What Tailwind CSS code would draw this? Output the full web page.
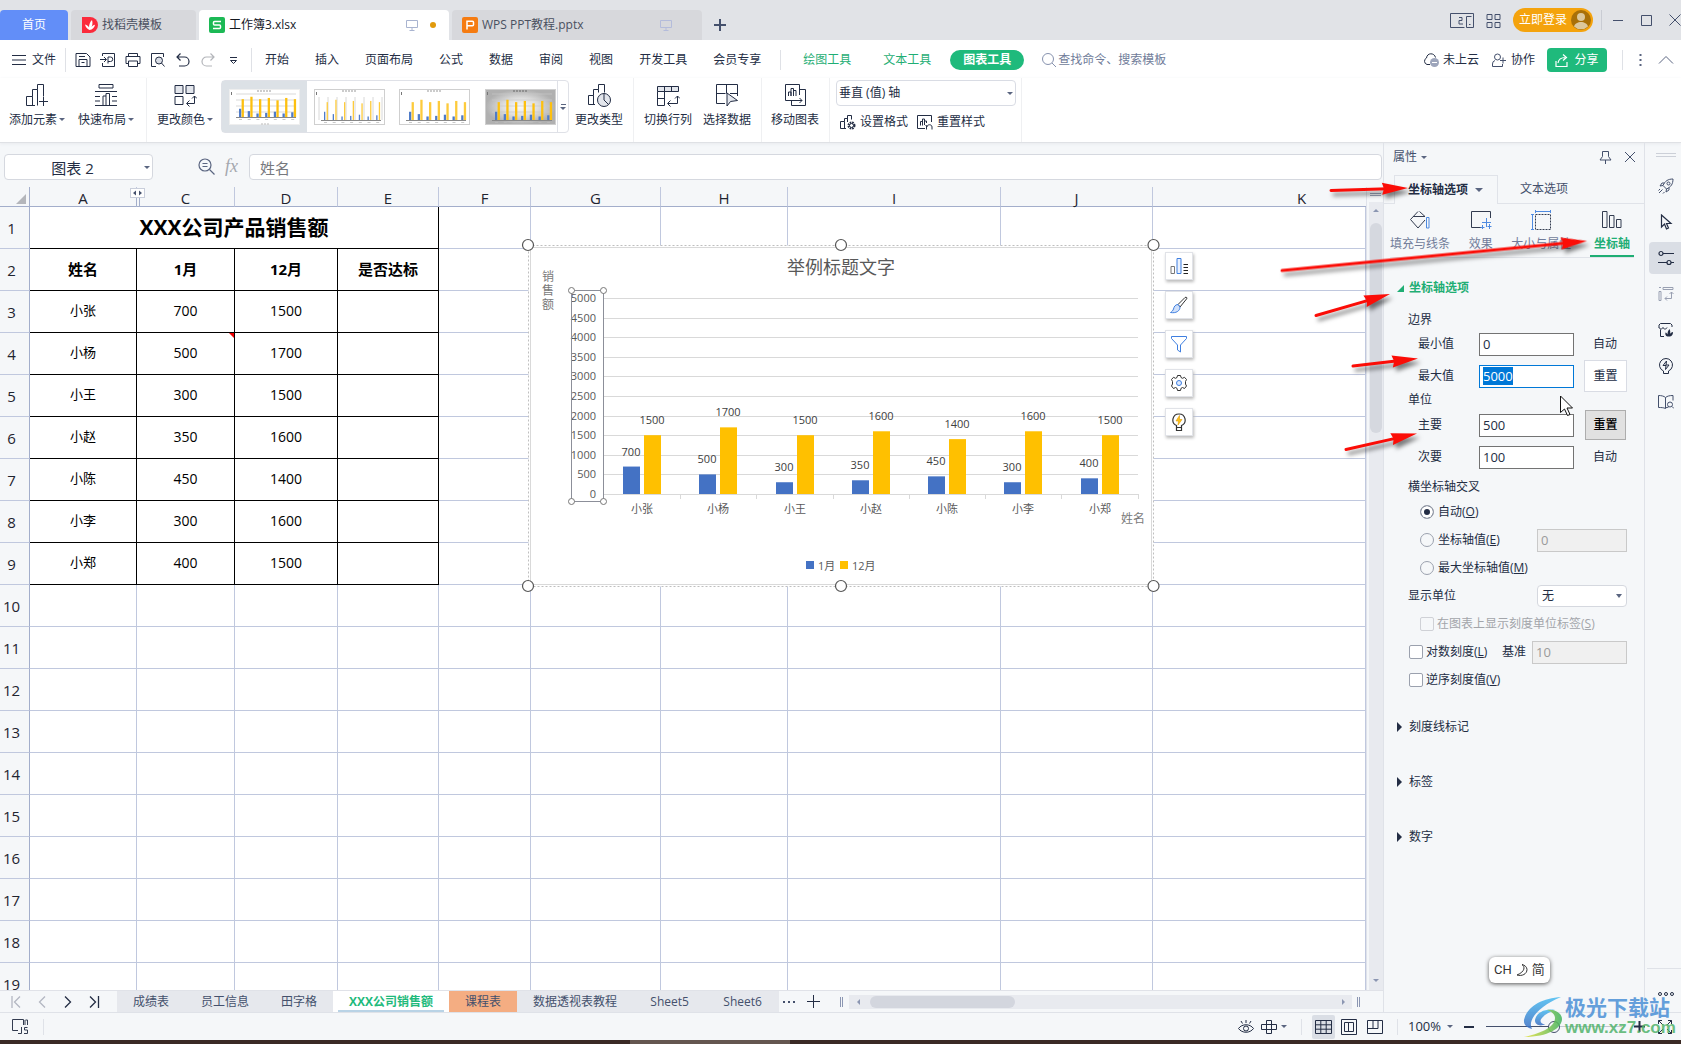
<!DOCTYPE html>
<html lang="zh-CN">
<head>
<meta charset="utf-8">
<title>工作簿3.xlsx</title>
<script src="https://cdn.jsdelivr.net/npm/@tailwindcss/browser@4"></script>
</head>
<body class="relative flex h-screen flex-col overflow-hidden bg-[#f5f7f9] font-['Open_Sans','Noto_Sans_CJK_SC',sans-serif] text-xs text-[#232d44]">

<!-- Window tabs -->
<header class="flex h-10 shrink-0 items-end justify-between bg-[#e1e3e7]">
  <div class="flex items-end gap-[3px]">
    <button class="h-[30px] w-[68px] rounded-t bg-[#628ef8] text-white">首页</button>
    <button class="flex h-[30px] w-[125px] items-center gap-1 rounded-t bg-[#d7d8dc] px-[11px] text-[#4a5060]">
      <svg class="size-4" viewBox="0 0 16 16"><path d="M0 0h8a8 8 0 0 1 0 16H0z" fill="#fb2a3b"/><path d="M7.500 13C5 12 3.500 10 3 7.500 5 8 6.500 9 7 10.500 7 7.500 8 5 10 3c.8 3 .5 5-.5 7 .8-1.200 2-2 3.500-2.300C12.500 10.500 10.500 12.500 7.500 13z" fill="#fff"/></svg>
      找稻壳模板</button>
    <button class="flex h-[30px] w-[250px] items-center gap-1 rounded-t bg-white px-[10px] text-[#14181f]">
      <svg class="size-4" viewBox="0 0 16 16"><rect width="16" height="16" rx="2" fill="#1cb955"/><path d="M12 4.500H5.500a1 1 0 0 0-1 1V7a1 1 0 0 0 1 1h5a1 1 0 0 1 1 1v1.500a1 1 0 0 1-1 1H4" fill="none" stroke="#fff" stroke-width="1.500"/></svg>
      工作簿3.xlsx
      <svg class="ml-auto size-3 text-[#a9b4d0]" viewBox="0 0 12 12" fill="none" stroke="currentColor"><path d="M.5 1.500h11v7H.5zM6 8.500v2.500M3.500 11.500h5"/></svg>
      <span class="mr-[3px] ml-2 size-[6px] rounded-full bg-[#e19a0c]"></span></button>
    <button class="flex h-[30px] w-[250px] items-center gap-1 rounded-t bg-[#d7d8dc] px-[10px] text-[#4a5060]">
      <svg class="size-4" viewBox="0 0 16 16"><rect width="16" height="16" rx="2" fill="#f57c12"/><path d="M5 12.500V4.200h5.500a1 1 0 0 1 1 1v2.600a1 1 0 0 1-1 1H5" fill="none" stroke="#fff" stroke-width="1.500"/></svg>
      WPS PPT教程.pptx
      <svg class="mr-5 ml-auto size-3 text-[#b4bcdb]" viewBox="0 0 12 12" fill="none" stroke="currentColor"><path d="M.5 1.500h11v7H.5zM6 8.500v2.500M3.500 11.500h5"/></svg></button>
    <button aria-label="新建" class="ml-[9px] h-[30px] text-[#44506c]"><svg class="size-3" viewBox="0 0 12 12" fill="none" stroke="currentColor" stroke-width="2"><path d="M6 0v12M0 6h12"/></svg></button>
  </div>
  <div class="flex h-10 items-center text-[#44506c]">
    <svg class="mr-3 h-[15px] w-6" viewBox="0 0 24 15" fill="none" stroke="currentColor"><path d="M14.500 14.500H.5V.5h23v14h-7V3.500h5"/><path d="M9 4.500h3v3H9v3.500h4M19 11.500h1.500"/></svg>
    <svg class="mr-3 size-[15px]" viewBox="0 0 15 15" fill="none" stroke="currentColor"><path d="M1 1.500h5v5H1zM9 1.500h5v5H9zM1 9.500h5v5H1zM9 9.500h5v5H9z"/></svg>
    <button class="flex h-6 w-20 items-center justify-between rounded-full bg-[#f4a30d] pr-[2px] pl-[6px] text-white">立即登录
      <svg class="size-5" viewBox="0 0 20 20"><circle cx="10" cy="10" r="10" fill="#a97008"/><circle cx="10" cy="7" r="4" fill="#dcc79c"/><path d="M3 16.500c1.500-6 12.500-6 14 0a10 10 0 0 1-14 0z" fill="#dcc79c"/></svg></button>
    <span class="mx-2 h-5 w-px bg-[#c9ccd3]"></span>
    <svg class="mx-[2px] h-3 w-3" viewBox="0 0 12 12" fill="none" stroke="currentColor"><path d="M1 6.500h10"/></svg>
    <svg class="mx-[15px] size-[11px]" viewBox="0 0 11 11" fill="none" stroke="currentColor"><path d="M.5.5h10v10H.5z"/></svg>
    <svg class="ml-[2px] size-3" viewBox="0 0 12 12" fill="none" stroke="currentColor"><path d="M.5.5l11 11M11.500.5l-11 11"/></svg>
  </div>
</header>

<!-- Menu row -->
<nav class="flex h-[38px] shrink-0 items-center bg-white pt-[2px]">
  <button class="flex items-center gap-[6px] pr-[9px] pl-3"><svg class="h-3 w-[14px]" viewBox="0 0 14 12" stroke="currentColor"><path d="M0 1.500h14M0 6h14M0 10.500h14"/></svg>文件</button>
  <span class="h-6 w-px bg-[#dfe1e6]"></span>
  <div class="flex items-center gap-[9px] pr-[10px] pl-[9px]">
    <svg class="size-4" viewBox="0 0 16 16" fill="none" stroke="currentColor"><path d="M1 1.500h10.500l3.500 3.500v9.500H1zM4 14.500V7.500h8v7M4 4.500h6M6.500 10.500h3"/></svg>
    <svg class="size-4" viewBox="0 0 16 16" fill="none" stroke="currentColor"><path d="M2.500 4V1.500h12v13h-12V11M0 7.500h6M4 5l2.500 2.500L4 10M8 11.500V5h2.500a2 2 0 0 1 0 4.500H8"/></svg>
    <svg class="size-4" viewBox="0 0 16 16" fill="none" stroke="currentColor"><path d="M3.500 4.500v-3h9v3M1 4.500h14v7h-2.500M3.500 11.500H1v-7M3.500 9h9v5.500h-9z"/></svg>
    <svg class="size-4" viewBox="0 0 16 16" fill="none" stroke="currentColor"><path d="M6 14.500H1.500v-13h12V5"/><circle cx="9" cy="8.500" r="3.500" fill="#d9dde5"/><path d="M11.500 11l3 3.500"/></svg>
    <svg class="size-4" viewBox="0 0 16 16" fill="none" stroke="currentColor" stroke-width="1.200"><path d="M5.500 1.500l-3.500 3.500 3.500 3.500M2 5h7.500a4.500 4.500 0 0 1 0 9H4"/></svg>
    <svg class="size-4 text-[#b3b5ba]" viewBox="0 0 16 16" fill="none" stroke="currentColor" stroke-width="1.200"><path d="M10.500 1.500l3.500 3.500-3.500 3.500M14 5H6.500a4.500 4.500 0 0 0 0 9H12"/></svg>
    <svg class="size-4" viewBox="0 0 16 16" fill="none" stroke="currentColor"><path d="M5 5.500h7M5.500 8.500L8.500 11.500 11.500 8.500z"/></svg>
  </div>
  <span class="h-6 w-px bg-[#dfe1e6]"></span>
  <button class="px-[13px]">开始</button><button class="px-[13px]">插入</button><button class="px-[13px]">页面布局</button><button class="px-[13px]">公式</button><button class="px-[13px]">数据</button><button class="px-[13px]">审阅</button><button class="px-[13px]">视图</button><button class="px-[13px]">开发工具</button><button class="px-[13px]">会员专享</button>
  <span class="mx-[6px] h-5 w-px bg-[#dfe1e6]"></span>
  <button class="px-4 text-[#1fae74]">绘图工具</button><button class="px-4 text-[#1fae74]">文本工具</button>
  <button class="ml-[3px] h-5 w-[74px] rounded-full bg-[#1fba7c] font-bold text-white">图表工具</button>
  <label class="ml-[18px] flex flex-1 items-center gap-[2px]">
    <svg class="size-[14px] shrink-0 text-[#8792ae]" viewBox="0 0 14 14" fill="none" stroke="currentColor"><circle cx="6" cy="6" r="5.500"/><path d="M10 10l4 4"/></svg>
    <input type="text" aria-label="查找命令、搜索模板" placeholder="查找命令、搜索模板" class="w-40 outline-none placeholder:text-[#707c99]"></label>
  <button class="mr-[13px] flex items-center gap-1"><svg class="size-4" viewBox="0 0 16 16" fill="none" stroke="currentColor"><path d="M7 12.500H4a3.500 3.500 0 0 1-.5-6.500C4 .5 11.500.500 12.500 5.500"/><circle cx="11.500" cy="10.500" r="4.500" fill="#9da5bb" stroke="none"/><path d="M9 10.500h5" stroke="#fff"/></svg>未上云</button>
  <button class="flex items-center gap-[5px]"><svg class="size-[14px] text-[#44506c]" viewBox="0 0 14 14" fill="none" stroke="currentColor"><circle cx="5.500" cy="4" r="3"/><path d="M3 7.500a3.500 3.500 0 0 0-2.500 3.500v2.500h10V11M8 7.500h6M11 4.500v6"/></svg>协作</button>
  <button class="mx-3 flex h-6 w-[60px] items-center justify-center gap-[6px] rounded bg-[#1fba7c] text-white"><svg class="size-[13px]" viewBox="0 0 13 13" fill="none" stroke="currentColor" stroke-width="1.200"><path d="M1 7v5.500h11V8M3 9c.5-4 3-5.500 7.500-5.500M8 .500l3.500 3L8 6.500"/></svg>分享</button>
  <span class="ml-[3px] h-5 w-px bg-[#dfe1e6]"></span>
  <svg class="mx-4 h-3 w-[3px]" viewBox="0 0 3 12" fill="#5a6580"><path d="M.5 0h2v2h-2zM.5 5h2v2h-2zM.5 10h2v2h-2z"/></svg>
  <svg class="mr-[7px] h-2 w-4" viewBox="0 0 16 8" fill="none" stroke="#5a6580"><path d="M1 7.500l7-7 7 7"/></svg>
</nav>

<!-- Ribbon -->
<section class="flex h-[65px] shrink-0 border-b border-[#dfe1e5] bg-white shadow-[0_1px_3px_#e8eaee]">
  <button class="ml-[9px] flex w-[59px] flex-col items-start gap-[5px] pt-[5px]">
    <svg class="ml-4 h-6 w-6" viewBox="0 0 24 24" fill="none" stroke="currentColor"><path d="M10 22.500H1.500v-9h6v9M7.500 13.500V6.500h5v16M12.500 6.500V1.500h6v12M14 18.500h9M18.500 14v9"/></svg>
    <span class="flex items-center gap-[2px] leading-4">添加元素<i class="mt-[-2px] border-x-3 border-t-3 border-x-transparent border-t-[#5a6580]"></i></span></button>
  <button class="ml-[10px] flex w-[59px] flex-col items-start gap-[5px] pt-[5px]">
    <svg class="ml-4 h-6 w-6" viewBox="0 0 24 24" fill="none" stroke="currentColor"><path d="M5 1.500h14v3.500H5zM1 8.500h22M1 13.500h5M1 18h5M1 22.500h22M18 13.500h5M18 18h5M9 22V13h3v9M12 13V10.500h3.500V22"/></svg>
    <span class="flex items-center gap-[2px] leading-4">快速布局<i class="mt-[-2px] border-x-3 border-t-3 border-x-transparent border-t-[#5a6580]"></i></span></button>
  <span class="ml-[9px] w-px bg-[#eff0f2]"></span>
  <button class="ml-[10px] flex w-[59px] flex-col items-start gap-[5px] pt-[5px]">
    <svg class="ml-4 h-6 w-6" viewBox="0 0 24 24" fill="none" stroke="currentColor"><path d="M2 2.500h8v8H2zM13 2.500h8v8h-8z" fill="#e3e6ec"/><path d="M2 13.500h8v8H2zM21.500 13v7.500H14M19 15.500l2.500-2.500 2.500 2.500M16.500 17.500l-3 3 3 3"/></svg>
    <span class="flex items-center gap-[2px] leading-4">更改颜色<i class="mt-[-2px] border-x-3 border-t-3 border-x-transparent border-t-[#5a6580]"></i></span></button>
  <div id="gallery" class="mt-[2px] ml-[5px] flex h-[53px] rounded-sm border border-[#dfe1e7]">
    <button aria-label="样式 1" class="flex w-[85px] items-center justify-center bg-[#dce1e6]"></button>
    <button aria-label="样式 2" class="flex w-[85px] items-center justify-center"></button>
    <button aria-label="样式 3" class="flex w-[85px] items-center justify-center"></button>
    <button aria-label="样式 4" class="flex w-[80px] items-center justify-end pr-px"></button>
    <button aria-label="更多样式" class="flex w-[11px] flex-col items-center justify-center gap-[2px] border-l border-[#dfe1e7]"><span class="h-px w-[5px] bg-[#5a6580]"></span><i class="border-x-3 border-t-3 border-x-transparent border-t-[#5a6580]"></i></button>
  </div>
  <button class="ml-[6px] flex w-12 flex-col items-center gap-[5px] pt-[5px]">
    <svg class="h-6 w-6" viewBox="0 0 24 24" fill="none" stroke="currentColor"><path d="M8 21.500H1.500v-9h5v9M6.500 12.500V6.500h5v3M11.500 6.500V1.500h6v8"/><circle cx="17" cy="17" r="6.500" fill="#e3e6ec"/><path d="M17 10.500V17l4.500 4.500"/></svg><span class="leading-4">更改类型</span></button>
  <span class="ml-[10px] w-px bg-[#eff0f2]"></span>
  <button class="ml-[10px] flex w-12 flex-col items-center gap-[5px] pt-[5px]">
    <svg class="h-6 w-6" viewBox="0 0 24 24" fill="none" stroke="currentColor"><path d="M1.500 3.500h21v5h-21z" fill="#e3e6ec"/><path d="M8.500 3.500v19h-7v-14M1.500 15.500h7M15.500 3.500v5M21.500 13v7.500H12M19 15.500l2.500-2.500 2.500 2.500M14.500 17.500l-3 3 3 3"/></svg><span class="leading-4">切换行列</span></button>
  <button class="ml-[11px] flex w-12 flex-col items-center gap-[5px] pt-[5px]">
    <svg class="h-6 w-6" viewBox="0 0 24 24" fill="none" stroke="currentColor"><path d="M10 20.500H1.500v-19h21V13M1.500 10.500h9M15 10.500h7.500M11.500 1.500v9"/><path d="M12 10v13l3.500-4.500 7-1z" fill="#e3e6ec"/></svg><span class="leading-4">选择数据</span></button>
  <span class="ml-[10px] w-px bg-[#eff0f2]"></span>
  <button class="ml-[9px] flex w-12 flex-col items-center gap-[5px] pt-[5px]">
    <svg class="h-6 w-6" viewBox="0 0 24 24" fill="none" stroke="currentColor"><path d="M16.500 12V1.500h-14v16H12M16.500 6.500h6v16h-14v-5M5.500 13V9h2.500v4M8 13V5.500h2.500V13M10.500 13V7.500H13V13M12 17.500h7M16.500 15l2.500 2.500-2.500 2.500"/></svg><span class="leading-4">移动图表</span></button>
  <span class="ml-[10px] w-px bg-[#eff0f2]"></span>
  <div class="ml-[6px] flex flex-col gap-2 pt-[2px]">
    <div class="relative flex">
      <select aria-label="图表元素" class="h-[26px] w-[180px] appearance-none rounded-sm border border-[#d9dce4] pl-[2px]"><option>垂直 (值) 轴</option></select>
      <i class="pointer-events-none absolute top-[12px] right-[3px] border-x-3 border-t-3 border-x-transparent border-t-[#5a6580]"></i>
    </div>
    <div class="flex gap-[9px] pl-1">
      <button class="flex items-center gap-1"><svg class="size-4" viewBox="0 0 16 16" fill="none" stroke="currentColor"><path d="M6 14.500H.5v-7h4v7M4.500 7.500V4.500h3M7.500 8V1.500h4v4"/><circle cx="11.500" cy="11.500" r="3" stroke-width="2" stroke-dasharray="1.600 .800"/><circle cx="11.500" cy="11.500" r="2"/></svg>设置格式</button>
      <button class="flex items-center gap-1"><svg class="size-4" viewBox="0 0 16 16" fill="none" stroke="currentColor"><path d="M8 14.500H.5v-13h14V8M3.500 11.500v-4h2v4M5.500 11V5h2v6M7.500 7h2v2M9.500 15.500v-4h-1M10 13c0-3 5-3 5 0v2.500"/></svg>重置样式</button>
    </div>
  </div>
  <span class="ml-[5px] w-px bg-[#eff0f2]"></span>
</section>

<main class="relative flex min-h-0 flex-1">
  <!-- Sheet -->
  <section class="flex min-w-0 flex-1 flex-col">
    <div class="flex h-11 shrink-0 items-start pt-[11px] pr-px pl-1">
      <div class="relative">
        <input type="text" aria-label="名称框" value="图表 2" class="h-[26px] w-[149px] rounded-sm border border-[#d5d8df] bg-white pr-3 text-center text-[15px]">
        <i class="absolute top-[12px] right-[3px] border-x-3 border-t-3 border-x-transparent border-t-[#5a6580]"></i>
      </div>
      <svg class="mt-1 ml-[45px] size-[17px]" viewBox="0 0 17 17" fill="none" stroke="#5a6580" stroke-width="1.200"><circle cx="7" cy="7" r="6"/><path d="M11.500 11.500l5 5M4.500 5.500h5M4.500 8.500h5"/></svg>
      <span class="ml-[10px] w-[15px] font-['Liberation_Serif',serif] text-lg leading-6 text-[#a4a7ae] italic">fx</span>
      <input type="text" aria-label="编辑栏" value="姓名" class="ml-[9px] h-[26px] min-w-0 flex-1 rounded-sm border border-[#d5d8df] bg-white pl-[10px] text-[15px] text-[#77797e]">
    </div>

    <div class="relative flex min-h-0 flex-1 overflow-hidden">
      <div class="min-w-0 flex-1 overflow-hidden border-r border-[#dfe2ea] bg-white">
        <table class="w-full table-fixed border-separate border-spacing-0">
          <colgroup><col class="w-[30px]"><col class="w-[107px]"><col class="w-[98px]"><col class="w-[103px]"><col class="w-[101px]"><col class="w-[92px]"><col class="w-[130px]"><col class="w-[127px]"><col class="w-[213px]"><col class="w-[152px]"><col></colgroup>
          <thead><tr id="cols" class="h-5 bg-[#f5f7f9] text-sm text-[#1f2430]"></tr></thead>
          <tbody id="rows"></tbody>
        </table>
      </div>
      <div class="flex w-4 shrink-0 flex-col bg-[#f5f7f9]">
        <div class="mx-auto mt-[6px] h-[3px] w-[11px] border-y border-[#9aa3b8]"></div>
        <div class="mt-[6px] ml-[2px] flex flex-1 flex-col items-center bg-[#e8eaef]">
          <i class="mt-[7px] border-x-3 border-b-3 border-x-transparent border-b-[#8b96b2]"></i>
          <span class="mt-[11px] h-[210px] w-3 rounded-full bg-[#d5d8df]"></span>
          <i class="mt-auto mb-2 border-x-3 border-t-3 border-x-transparent border-t-[#8b96b2]"></i>
        </div>
      </div>

      <svg class="absolute top-0 left-[130px] h-5 w-[15px]" viewBox="0 0 15 20"><path d="M6.500 10v9.500M9.500 10v9.500" stroke="#a3aecb"/><rect x=".5" y="1.500" width="14" height="9" fill="#fff" stroke="#c9cedb"/><path d="M6 3.500v5L3 6zM9 3.500v5L12 6z" fill="#44506c"/></svg>
      <svg id="chart" class="absolute top-[49px] left-[520px] h-[360px] w-[640px]" viewBox="520 236 640 360" fill="none"></svg>

      <div class="absolute top-[65px] left-[1165px] flex flex-col gap-[11px]">
        <button aria-label="图表元素" class="flex size-7 items-center justify-center border border-[#e1e3e8] bg-white shadow-[1px_2px_3px_#bbb]"><svg class="size-[18px]" viewBox="0 0 18 18" fill="none"><path d="M1 9.500h3.500v7H1z" stroke="#777"/><path d="M7 1.500h4v15H7z" stroke="#3f7fe0" fill="#eaf2ff"/><path d="M13.500 7.500H18M13.500 10.500H18M13.500 13.500H18M13.500 16.500H18" stroke="#222"/></svg></button>
        <button aria-label="图表样式" class="flex size-7 items-center justify-center border border-[#e1e3e8] bg-white shadow-[1px_2px_3px_#bbb]"><svg class="size-[18px]" viewBox="0 0 18 18" fill="none"><path d="M8 8.500L15 1.500c1.500-1 2.500.5 1.500 1.500L10 11z" stroke="#333"/><path d="M8 8.500C5 8.500 4 11 3.500 13 3 14.500 2 15.500.5 16.500 6 17.500 10 15 10 11z" fill="#cfe0fb" stroke="#3f7fe0"/></svg></button>
        <button aria-label="图表筛选器" class="flex size-7 items-center justify-center border border-[#e1e3e8] bg-white shadow-[1px_2px_3px_#bbb]"><svg class="size-[18px]" viewBox="0 0 18 18" fill="none"><path d="M1.500 1.500h15v2L10.500 10v7l-3-2v-5l-6-6.500z" stroke="#3f7fe0"/></svg></button>
        <button aria-label="设置图表区域格式" class="flex size-7 items-center justify-center border border-[#e1e3e8] bg-white shadow-[1px_2px_3px_#bbb]"><svg class="size-[18px]" viewBox="0 0 18 18" fill="none"><path d="M7.500 1.500h3l.5 2 1.500.8 2-1 2 2.200-1 2v2.500l1 2-2 2.500-2-1-1.500.8-.5 2.200h-3L7 14.300l-1.500-.8-2 1-2-2.500 1-2V7.500l-1-2 2-2.200 2 1L7 3.500z" stroke="#333" stroke-linejoin="round"/><circle cx="9" cy="9" r="2.500" stroke="#3f7fe0" fill="#dce9ff"/></svg></button>
        <button aria-label="在线图表" class="flex size-7 items-center justify-center border border-[#e1e3e8] bg-white shadow-[1px_2px_3px_#bbb]"><svg class="size-[18px]" viewBox="0 0 18 18" fill="none"><path d="M6.500 14v-1.500A6 6 0 0 1 9 1a6 6 0 0 1 2.500 11.500V14M6.500 14.500h5v3h-5z" stroke="#333" stroke-width="1.200"/><path d="M9.500 2.500L6 8h2.500L8 12l4-5.500H9.500z" fill="#ffc31a" stroke="#e09a00" stroke-width=".6"/></svg></button>
      </div>
    </div>

    <!-- Sheet tabs -->
    <div class="flex h-[22px] shrink-0 border-t border-[#e0e2e8]">
      <div class="flex w-[117px] items-center gap-[14px] pl-[11px]">
        <svg class="size-3 text-[#b3b7c2]" viewBox="0 0 12 12" fill="none" stroke="currentColor" stroke-width="1.300"><path d="M1 0v12M9 .5L3.500 6 9 11.500"/></svg>
        <svg class="size-3 text-[#b3b7c2]" viewBox="0 0 12 12" fill="none" stroke="currentColor" stroke-width="1.300"><path d="M8 .5L2.500 6 8 11.500"/></svg>
        <svg class="size-3" viewBox="0 0 12 12" fill="none" stroke="currentColor" stroke-width="1.300"><path d="M2 .5L7.500 6 2 11.500"/></svg>
        <svg class="size-3" viewBox="0 0 12 12" fill="none" stroke="currentColor" stroke-width="1.300"><path d="M1 .5L6.500 6 1 11.500M9.500 0v12"/></svg>
      </div>
      <div class="flex bg-[#e6e8ed] text-[#44506c]">
        <button class="px-4">成绩表</button><button class="px-4">员工信息</button><button class="px-4">田字格</button>
        <button class="relative bg-white px-4 font-bold text-[#1fba7c]">XXX公司销售额<span class="absolute inset-x-[5px] bottom-0 h-[2px] bg-[#b9d3e6]"></span></button>
        <button class="bg-[#f4ad82] px-4">课程表</button><button class="px-4">数据透视表教程</button>
        <button class="w-[73px]">Sheet5</button><button class="w-[73px]">Sheet6</button>
      </div>
      <div class="flex flex-1 items-center">
        <svg class="ml-[4px] h-[2px] w-3" viewBox="0 0 12 2" fill="#44506c"><path d="M0 0h2v2H0zM5 0h2v2H5zM10 0h2v2h-2z"/></svg>
        <svg class="ml-3 size-[13px]" viewBox="0 0 13 13" fill="none" stroke="currentColor"><path d="M6.500 0v13M0 6.500h13"/></svg>
        <span class="mr-[6px] ml-5 h-[10px] w-[3px] border-x border-[#8b96b2]"></span>
        <div class="flex h-[14px] flex-1 items-center bg-[#e8eaef]">
          <i class="mr-[10px] ml-2 border-y-3 border-r-3 border-y-transparent border-r-[#8b96b2]"></i>
          <span class="h-3 w-[145px] rounded-full bg-[#d3d6de]"></span>
          <i class="mr-[7px] ml-auto border-y-3 border-l-3 border-y-transparent border-l-[#8b96b2]"></i>
        </div>
        <span class="mr-[23px] ml-[5px] h-[10px] w-[3px] border-x border-[#8b96b2]"></span>
      </div>
    </div>
  </section>

  <!-- Property panel -->
  <aside class="w-[262px] shrink-0 border-x border-[#dfe2e8]">
    <div class="flex h-7 items-center pr-2 pl-[9px] text-[#44506c]">
      <button class="flex items-center gap-1">属性<i class="border-x-3 border-t-3 border-x-transparent border-t-[#5a6580]"></i></button>
      <svg class="mr-3 ml-auto size-[13px]" viewBox="0 0 13 13" fill="none" stroke="currentColor"><path d="M3.500.5h6v5l2.500 3.500H1l2.500-3.500zM6.500 9v4"/></svg>
      <svg class="size-3" viewBox="0 0 12 12" fill="none" stroke="currentColor"><path d="M1 1l10 10M11 1L1 11"/></svg>
    </div>
    <div class="mt-1 flex h-[29px] text-[#44506c]">
      <span class="w-[10px] border-b border-[#e0e3e9]"></span>
      <button class="flex w-[104px] items-center gap-[7px] border-x border-t border-[#e0e3e9] pl-[13px] font-bold text-[#232d44]">坐标轴选项<i class="border-x-4 border-t-4 border-x-transparent border-t-[#5a6580]"></i></button>
      <button class="flex-1 border-b border-[#e0e3e9] pl-[22px] text-left">文本选项</button>
    </div>
    <div class="mr-[10px] ml-[6px] flex h-[54px] justify-between border-b border-[#e0e3e9] text-[#717c9a]">
      <button class="flex flex-col items-center gap-[6px] pt-[6px]"><svg class="h-5 w-[22px]" viewBox="0 0 22 20" fill="none"><path d="M9 1.500L1.500 9.500 9 18l7-8M4 6.500h12L10.500 1.500" stroke="#333c50"/><path d="M17.500 7.500h2.500V18h-2.500z" stroke="#4e8ae0"/></svg><span class="leading-4">填充与线条</span></button>
      <button class="flex flex-col items-center gap-[6px] pt-[6px]"><svg class="h-5 w-[22px]" viewBox="0 0 22 20" fill="none"><path d="M11 17.500H1.500v-16h19V8" stroke="#333c50"/><path d="M16.500 8v9M12 12.500h9M12.500 15v4M10.500 17.500h4M19.500 14v5M17.500 16.500h4" stroke="#4e8ae0"/></svg><span class="leading-4">效果</span></button>
      <button class="flex flex-col items-center gap-[6px] pt-[6px]"><svg class="h-5 w-[22px]" viewBox="0 0 22 20" fill="none"><path d="M5.500 4.500h15v15h-15z" stroke="#333c50" stroke-dasharray="2 1"/><path d="M5 1.500h16M5.500 0v3M20.500 0v3M2.500 4v16M1 4.500h3M1 19.500h3" stroke="#4e8ae0"/></svg><span class="leading-4">大小与属性</span></button>
      <button class="flex w-11 flex-col items-center gap-[6px] border-b-2 border-[#1fae74] pt-[6px] font-bold text-[#1fae74]"><svg class="h-5 w-[22px]" viewBox="0 0 22 20" fill="none" stroke="#333c50"><path d="M1.500 1.500H6v16H1.500zM8.500 5.500H13v12H8.500zM15.500 9.500H20v8h-4.500z"/></svg><span class="leading-4">坐标轴</span></button>
    </div>
    <button class="mt-4 flex h-7 items-center gap-[5px] pl-[13px] font-bold text-[#1fae74]"><svg class="size-[7px]" viewBox="0 0 7 7" fill="currentColor"><path d="M7 0v7H0z"/></svg>坐标轴选项</button>
    <form class="pl-6">
      <p class="mt-2 h-5 leading-5">边界</p>
      <div class="flex h-7 items-center pl-[10px]"><label for="mn" class="w-[61px]">最小值</label><input id="mn" type="text" value="0" class="h-[23px] w-[95px] border border-[#737373] bg-white pl-[3px] text-[13px]"><span class="ml-[19px]">自动</span></div>
      <div class="mt-[2px] flex h-8 items-center pl-[10px]"><label for="mx" class="w-[61px]">最大值</label><input id="mx" type="text" value="5000" class="h-[23px] w-[95px] border border-[#0078d7] bg-white pl-[3px] text-[13px] outline-none selection:bg-[#0078d7] selection:text-white"><button type="button" class="ml-[10px] h-8 w-[43px] border border-[#d9dce4] bg-white">重置</button></div>
      <p class="h-4 leading-4">单位</p>
      <div class="mt-px flex h-8 items-center pl-[10px]"><label for="mj" class="w-[61px]">主要</label><input id="mj" type="text" value="500" class="h-[23px] w-[95px] border border-[#737373] bg-white pl-[3px] text-[13px]"><button type="button" class="ml-[11px] h-[30px] w-[41px] border border-[#adadad] bg-[#e1e1e1] font-medium text-black">重置</button></div>
      <div class="flex h-8 items-center pl-[10px]"><label for="mi" class="w-[61px]">次要</label><input id="mi" type="text" value="100" class="h-[23px] w-[95px] border border-[#737373] bg-white pl-[3px] text-[13px]"><span class="ml-[19px]">自动</span></div>
      <p class="h-[25px] pt-[2px] leading-6">横坐标轴交叉</p>
      <div class="flex h-7 items-center pl-3"><label class="flex items-center gap-1"><input type="radio" name="cross" checked class="size-[14px] appearance-none rounded-full border border-[#9ba1ae] bg-white checked:bg-[#232d44] checked:shadow-[inset_0_0_0_3px_#fff]"><span>自动(<u>O</u>)</span></label></div>
      <div class="flex h-7 items-center justify-between pr-[17px] pl-3"><label class="flex items-center gap-1"><input type="radio" name="cross" class="size-[14px] appearance-none rounded-full border border-[#9ba1ae] bg-[#f5f7f9]"><span>坐标轴值(<u>E</u>)</span></label><input type="text" aria-label="坐标轴值" value="0" disabled class="h-[23px] w-[90px] border border-[#c9c9c9] bg-[#f0f0f0] pl-[3px] text-[13px] text-[#9a9a9a]"></div>
      <div class="flex h-7 items-center pl-3"><label class="flex items-center gap-1"><input type="radio" name="cross" class="size-[14px] appearance-none rounded-full border border-[#9ba1ae] bg-[#f5f7f9]"><span>最大坐标轴值(<u>M</u>)</span></label></div>
      <div class="relative flex h-7 items-center justify-between pr-[17px]"><label for="du">显示单位</label><select id="du" class="h-[22px] w-[90px] appearance-none rounded-sm border border-[#d5d8df] bg-white pl-1"><option>无</option></select><i class="pointer-events-none absolute top-3 right-[22px] border-x-3 border-t-4 border-x-transparent border-t-[#5a6580]"></i></div>
      <div class="flex h-7 items-center pl-3"><label class="flex items-center gap-[3px] text-[#a3a5aa]"><input type="checkbox" disabled class="size-[14px] appearance-none rounded-xs border border-[#cfd1d6]"><span>在图表上显示刻度单位标签(<u>S</u>)</span></label></div>
      <div class="flex h-7 items-center pl-px"><label class="flex items-center gap-[3px]"><input type="checkbox" class="size-[14px] appearance-none rounded-xs border border-[#9ba1ae] bg-white"><span>对数刻度(<u>L</u>)</span></label><label for="bs" class="mr-[6px] ml-auto">基准</label><input id="bs" type="text" value="10" disabled class="mr-[17px] h-[23px] w-[95px] border border-[#c9c9c9] bg-[#f0f0f0] pl-[3px] text-[13px] text-[#9a9a9a]"></div>
      <div class="flex h-7 items-center pl-px"><label class="flex items-center gap-[3px]"><input type="checkbox" class="size-[14px] appearance-none rounded-xs border border-[#9ba1ae] bg-white"><span>逆序刻度值(<u>V</u>)</span></label></div>
    </form>
    <div class="mt-[5px] flex flex-col items-start pl-[13px]">
      <button class="flex h-[55px] items-center gap-[7px]"><i class="border-y-5 border-l-5 border-y-transparent border-l-[#232d44]"></i>刻度线标记</button>
      <button class="flex h-[55px] items-center gap-[7px]"><i class="border-y-5 border-l-5 border-y-transparent border-l-[#232d44]"></i>标签</button>
      <button class="flex h-[55px] items-center gap-[7px]"><i class="border-y-5 border-l-5 border-y-transparent border-l-[#232d44]"></i>数字</button>
    </div>
  </aside>

  <!-- Tool rail -->
  <aside class="flex w-9 shrink-0 flex-col text-[#44506c]">
    <div class="mr-[5px] mt-[10px] mb-[11px] ml-auto h-1 w-5 shrink-0 border-y border-[#ccd0d8]"></div>
    <button aria-label="快捷" class="flex h-9 items-center justify-center"><svg class="ml-[6px] size-4" viewBox="0 0 16 16" fill="none" stroke="currentColor"><path d="M5 7.500C7 3 10 1 15 1c0 5-2 8-6.500 10zM5 7.500L2 8l2-3h2.500M8.500 11L8 14l3-2V9.500M2 11l-1.500 1.500M4.500 11.500L1 15M6.500 14L5 15.500"/><circle cx="10.500" cy="5.500" r="1.500"/></svg></button>
    <button aria-label="选择" class="flex h-9 items-center justify-center text-[#232d44]"><svg class="ml-[6px] size-4" viewBox="0 0 16 16" fill="none" stroke="currentColor" stroke-width="1.200"><path d="M3.500 1v12l3-3 2 5 2-1-2-4.500H13z"/></svg></button>
    <button aria-label="属性" class="my-[2px] ml-1 flex h-8 items-center justify-center rounded-l-sm bg-[#dadee5] text-[#232d44]"><svg class="ml-[2px] size-4" viewBox="0 0 16 16" fill="none" stroke="currentColor" stroke-width="1.200"><circle cx="3" cy="3.500" r="2"/><path d="M5 3.500h11M0 12.500h9M13 12.500h3"/><circle cx="11" cy="12.500" r="2"/></svg></button>
    <button aria-label="分析" class="flex h-9 items-center justify-center text-[#99a0b2]"><svg class="ml-[6px] size-4" viewBox="0 0 16 16" fill="none" stroke="currentColor"><path d="M1 1.500h2M5 1.500h10v2H5zM1 5.500h2v9H1zM13.500 6v6.500H7M11.500 8l2-2 2 2M9 10.500l-2 2 2 2"/></svg></button>
    <button aria-label="素材" class="flex h-9 items-center justify-center text-[#232d44]"><svg class="ml-[6px] size-4" viewBox="0 0 16 16" fill="none" stroke="currentColor"><path d="M2.500 7.500v7H6M1 5.500V3l1.500-1.500h10L14 3v2M1 5c0 2.500 3.500 2.500 4 .5.500 2 3.500 2 4 0"/><path d="M9.500 14.500c-2-.5-2.500-2-2-4 1 .3 1.500 1 2 2 0-2 .5-4 2-5.500.8 1.500 1 3 .5 5 .6-1 1.500-1.700 3-2 0 2.500-1 4-3 4.500z" fill="currentColor" stroke="none"/></svg></button>
    <button aria-label="推荐" class="flex h-9 items-center justify-center text-[#232d44]"><svg class="ml-[6px] size-4" viewBox="0 0 16 16" fill="none" stroke="currentColor"><path d="M5.500 13A6.500 6.500 0 1 1 10.500 13v2.500h-5zM8.500 3L5 7.500H8L7.500 11.500l3.500-4.500H8z"/></svg></button>
    <button aria-label="帮助" class="flex h-9 items-center justify-center text-[#44506c]"><svg class="ml-[6px] size-4" viewBox="0 0 16 16" fill="none" stroke="currentColor"><path d="M7.500 14.500V3.500C6 2 3 1.500.500 1.500v12c2.500 0 5 0 7 1zM7.500 3.500c2-1.500 4-2 7.500-2v5M7.500 14c1-.5 2-.8 3-.8"/><circle cx="12" cy="10.500" r="2.500"/><path d="M14 12.500l2 2"/></svg></button>
    <span class="mt-auto ml-[2px] h-px shrink-0 bg-[#dfe2e8]"></span>
    <svg class="mt-[23px] mr-[7px] mb-4 ml-auto h-1 w-4 shrink-0" viewBox="0 0 16 4" fill="none" stroke="#232d44"><circle cx="2" cy="2" r="1.500"/><circle cx="8" cy="2" r="1.500"/><circle cx="14" cy="2" r="1.500"/></svg>
  </aside>

  <!-- Annotation arrows and pointer -->
  <svg class="pointer-events-none absolute top-0 right-0 h-[330px] w-[411px]" viewBox="1270 143 411 330">
    <g id="arrows" fill="#fb0d07" stroke="#fb0d07" style="filter:drop-shadow(3px 4px 2px rgba(0,0,0,.5))"></g>
    <path d="M1560.500 396v16.500l4-3.500 3 6.500 2.500-1-3-6.500h5.500z" fill="#fff" stroke="#111"/>
  </svg>

  <div class="absolute right-[131px] bottom-[29px] flex h-[26px] w-[61px] items-center justify-center gap-1 rounded-md bg-white font-['Roboto','Noto_Sans_CJK_SC',sans-serif] text-[13px] text-[#333] shadow-[0_1px_4px_#555]">CH<svg class="size-3" viewBox="0 0 12 12" fill="none" stroke="#333"><path d="M6 .5c3 2 3.500 7-5 10.500 5 1.500 10-1 10-5.500C11 3 8.500 1 6 .500z"/></svg>简</div>
</main>

<!-- Status bar -->
<footer class="flex h-7 shrink-0 items-center border-t border-[#dfe2e8]">
  <svg class="ml-3 size-4" viewBox="0 0 16 16" fill="none" stroke="#333c50"><path d="M6 11.500H.5V.5h11V6M13 1v5M15.500 6V1h-2M9.500 8v6.500H6M15.500 8.500h-3v2.500h3v3.500h-3.500"/></svg>
  <span class="ml-[15px] h-4 w-px bg-[#dfe2e8]"></span>
  <div class="ml-auto flex items-center">
    <svg class="size-4" viewBox="0 0 16 16" fill="none" stroke="currentColor"><path d="M.5 9.500c3.500-5 11.500-5 15 0-3.500 5-11.500 5-15 0zM8 1v3M3 2l1.500 2.500M13 2l-1.500 2.500"/><circle cx="8" cy="9.500" r="2.500"/></svg>
    <svg class="ml-[7px] size-4" viewBox="0 0 16 16" fill="none" stroke="currentColor"><path d="M5.500 1.500h5v13h-5zM.5 5.500h15v5H.500z"/></svg>
    <i class="mr-[14px] ml-1 border-x-3 border-t-3 border-x-transparent border-t-[#5a6580]"></i>
    <span class="h-4 w-px bg-[#dfe2e8]"></span>
    <button aria-label="普通视图" class="ml-[10px] flex h-6 w-[23px] items-center justify-center rounded-xs bg-[#dadee5]"><svg class="h-[14px] w-[17px]" viewBox="0 0 17 14" fill="none" stroke="currentColor"><path d="M.5.500h16v13H.500zM.5 4.800h16M.5 9.200h16M5.800.500v13M11.200.500v13"/></svg></button>
    <svg class="ml-[6px] size-4" viewBox="0 0 16 16" fill="none" stroke="currentColor"><path d="M.5.500h15v15H.500zM3.500 3.500h4v9h-4zM7.500 3.500h5v9h-5z"/></svg>
    <svg class="ml-[10px] h-[14px] w-4" viewBox="0 0 16 14" fill="none" stroke="currentColor"><path d="M.5.500h15v13H.500zM.5 8.500h10.500V.5M6 .5v8"/></svg>
    <span class="ml-[14px] h-4 w-px bg-[#dfe2e8]"></span>
    <button class="ml-[10px] flex items-center gap-[6px] text-[13px]">100%<i class="border-x-3 border-t-3 border-x-transparent border-t-[#5a6580]"></i></button>
    <span class="ml-[11px] h-[2px] w-[10px] bg-[#232d44]"></span>
    <input type="range" aria-label="缩放" value="50" class="mx-3 h-px w-[136px] appearance-none bg-linear-to-r from-[#44506c] from-50% to-[#c3c8d3] to-50% [&::-webkit-slider-thumb]:size-3 [&::-webkit-slider-thumb]:appearance-none [&::-webkit-slider-thumb]:rounded-full [&::-webkit-slider-thumb]:border [&::-webkit-slider-thumb]:border-[#44506c] [&::-webkit-slider-thumb]:bg-[#f5f7f9]">
    <svg class="size-[11px]" viewBox="0 0 11 11" fill="none" stroke="currentColor" stroke-width="2"><path d="M5.500 0v11M0 5.500h11"/></svg>
    <svg class="mr-[9px] ml-[13px] size-[14px]" viewBox="0 0 14 14" fill="none" stroke="currentColor"><path d="M.5 4V.5H4M10 .5h3.500V4M13.500 10v3.500H10M4 13.500H.5V10M.5.500l4.500 4.500M13.500.500L9 5M13.500 13.500L9 9M.5 13.500L5 9"/></svg>
  </div>
</footer>
<div class="flex h-1 shrink-0 bg-[#3a2a25]"><span class="ml-[630px] w-40 bg-[#645650]"></span></div>

<!-- Site mark -->
<div class="pointer-events-none absolute right-[11px] bottom-[6px] flex items-center gap-[2px] opacity-85">
  <svg class="h-[42px] w-10" viewBox="0 0 40 42"><defs><linearGradient id="ga" x2="0" y2="1"><stop offset="0" stop-color="#49bdf2"/><stop offset="1" stop-color="#3b6fc4"/></linearGradient><linearGradient id="gb" x2="1" y2="0"><stop offset="0" stop-color="#e8e23a"/><stop offset="1" stop-color="#3fb25e"/></linearGradient></defs>
    <path d="M38 1C20 2 4 10 1 24c-.5 5 3 8 8 9C4 24 16 10 38 1z" fill="url(#ga)"/><path d="M32 14c-10-2-19 3-20 10-.5 5 6 7 10 4-4 0-6-3-3-6 3-4 8-6 13-8z" fill="url(#ga)"/><path d="M24 14c7-1 15 3 15 9 0 9-14 18-38 18 14-3 31-9 31-19 0-4-4-7-8-8z" fill="url(#gb)"/></svg>
  <div class="w-[105px]">
    <p class="text-[21px] leading-[22px] font-bold whitespace-nowrap text-[#4b90d6]">极光下载站</p>
    <p class="font-['Liberation_Sans',sans-serif] text-[17px] leading-5 font-bold whitespace-nowrap text-[#52b36c]">www.xz7.com</p>
  </div>
</div>

<script>
const people = [['小张',700,1500],['小杨',500,1700],['小王',300,1500],['小赵',350,1600],['小陈',450,1400],['小李',300,1600],['小郑',400,1500]];

// Worksheet
document.getElementById('cols').innerHTML =
  '<th class="border-r border-b border-r-[#a3aecb] border-b-[#a3aecb]"><svg class="mt-1 ml-4 size-[10px]" viewBox="0 0 10 10"><path d="M10 0v10H0z" fill="#b4b6bb"/></svg></th>' +
  [...'ACDEFGHIJ'].map(c => '<th scope="col" class="border-r border-b border-r-[#c0c8de] border-b-[#a3aecb] p-0 pt-1 text-[15px] leading-[15px] font-normal">' + c + '</th>').join('') +
  '<th scope="col" class="border-b border-b-[#a3aecb] p-0 pt-1 pl-[84px] text-[15px] leading-[15px] font-normal">K</th>';
const blank = '<td class="border-r border-b border-[#c0c8de]"></td>';
const cell = 'border-r border-b border-black p-0 pb-[2px] text-center text-sm text-black ';
let html = '';
for (let r = 1; r <= 19; r++) {
  html += '<tr class="h-[42px]"><th scope="row" class="border-r border-b border-r-[#a3aecb] border-b-[#c0c8de] bg-[#f5f7f9] p-0 pr-[6px] text-[15px] font-normal text-[#1f2430]">' + r + '</th>';
  if (r === 1) html += '<td colspan="4" class="border-r border-b border-black p-0 pb-[2px] text-center text-[21px] leading-6 font-bold text-black">XXX公司产品销售额</td>' + blank.repeat(6);
  else if (r === 2) html += ['姓名','1月','12月','是否达标'].map(t => '<td class="border-r border-b border-black p-0 pb-[2px] text-center text-[15px] font-bold text-black">' + t + '</td>').join('') + blank.repeat(6);
  else if (r <= 9) {
    const p = people[r - 3];
    html += '<td class="border-r border-b border-black p-0 pb-[2px] text-center text-[13px] text-black">' + p[0] + '</td>' +
      '<td class="relative ' + cell + '">' + p[1] + (r === 4 ? '<i class="absolute top-0 right-0 border-t-5 border-l-5 border-t-[#f00000] border-l-transparent"></i>' : '') + '</td>' +
      '<td class="' + cell + '">' + p[2] + '</td><td class="' + cell + '"></td>' + blank.repeat(6);
  } else html += blank.repeat(10);
  html += '</tr>';
}
document.getElementById('rows').innerHTML = html;

// Column chart
const X0 = 604, X1 = 1138, Y0 = 494, K = 196 / 5000, W = (X1 - X0) / 7;
let s = '<rect x="528.5" y="245.500" width="625" height="341" fill="#fff" stroke="#bfbfbf" stroke-dasharray="2 2"/><rect x="530.5" y="247.500" width="621" height="337" stroke="#d9d9d9"/>';
for (let v = 0; v <= 5000; v += 500) {
  const y = Math.round(Y0 - v * K);
  s += `<path d="M${X0} ${y + .5}H${X1}" stroke="#d9d9d9"/><text x="596" y="${y + 4}" text-anchor="end" font-size="11" fill="#595959">${v}</text>`;
}
people.forEach((p, i) => {
  const x = Math.round(X0 + i * W), b = p[1] * K, y = p[2] * K;
  s += `<path d="M${Math.round(x + W) + .5} ${Y0}v5" stroke="#d9d9d9"/>` +
    `<rect x="${x + 19}" y="${Y0 - b}" width="17" height="${b}" fill="#4472c4"/><rect x="${x + 40}" y="${Y0 - y}" width="17" height="${y}" fill="#ffc000"/>` +
    `<text x="${x + 27}" y="${Math.round(Y0 - b - 11)}" text-anchor="middle" font-size="11" fill="#404040">${p[1]}</text>` +
    `<text x="${x + 48}" y="${Math.round(Y0 - y - 11)}" text-anchor="middle" font-size="11" fill="#404040">${p[2]}</text>` +
    `<text x="${x + 38}" y="513" text-anchor="middle" font-size="11" fill="#595959">${p[0]}</text>`;
});
s += '<text x="841" y="274" text-anchor="middle" font-size="18" fill="#595959">举例标题文字</text>' +
  '<g font-size="12" fill="#7a7a7a" text-anchor="middle"><text x="548" y="281">销</text><text x="548" y="295">售</text><text x="548" y="309">额</text><text x="1133" y="523">姓名</text></g>' +
  '<rect x="806" y="561" width="8" height="8" fill="#4472c4"/><rect x="840" y="561" width="8" height="8" fill="#ffc000"/>' +
  '<g font-size="11" fill="#595959"><text x="818" y="570">1月</text><text x="852" y="570">12月</text></g>' +
  '<rect x="571.5" y="290.500" width="32" height="211" stroke="#8c8f99"/>';
for (const [x, y] of [[571.5,290.5],[603.5,290.5],[571.5,501.5],[603.5,501.5]]) s += `<circle cx="${x}" cy="${y}" r="3" fill="#fff" stroke="#777"/>`;
for (const x of [528, 841, 1153.5]) for (const y of [245, 586]) s += `<circle cx="${x}" cy="${y}" r="5.500" fill="#fff" stroke="#555" stroke-width="1.200"/>`;
document.getElementById('chart').innerHTML = s;

// Gallery thumbnails
document.querySelectorAll('#gallery button').forEach((b, k) => {
  if (k > 3) return;
  const dark = k === 3, base = k === 0 ? 28 : 31;
  let t = `<svg class="h-9 w-[71px]" viewBox="0 0 71 36"><defs><radialGradient id="dk"><stop offset="0" stop-color="#fafafa"/><stop offset=".5" stop-color="#dedede"/><stop offset="1" stop-color="#b0b0b0"/></radialGradient></defs><rect x=".5" y=".5" width="70" height="35" fill="${dark ? 'url(#dk)' : '#fff'}" stroke="${k ? '#cfcfcf' : '#eee'}"/><path d="M28 2h15" stroke="${dark ? '#666' : '#999'}" stroke-dasharray="2 1"/><path d="M2.500 3v3" stroke="#777"/><path d="M7 ${base + .5}h60" stroke="#888"/>`;
  if (k === 1) for (let i = 0; i < 8; i++) t += `<path d="M${5 + i * 9} 8v23" stroke="#d8d8d8"/>`;
  else if (k !== 2) for (let i = 0; i < 4; i++) t += `<path d="M7 ${5 + i * 6}h60" stroke="#c9c9c9" stroke-width=".7"/>`;
  if (k === 0) t += '<path d="M32 35h8" stroke="#bbb" stroke-dasharray="2 1"/>';
  people.forEach((p, i) => {
    const w = k === 1 ? 1.3 : 2.300, x = 10 + i * 8.700;
    t += `<rect x="${x}" y="${base - p[1] / 85}" width="${w}" height="${p[1] / 85}" fill="#4f7bc8"/><rect x="${x + 2.6}" y="${base - p[2] / 84}" width="${w}" height="${p[2] / 84}" fill="${k === 1 || k === 2 ? '#fdcb3c' : '#fdc010'}"/><path d="M${x} ${base + 2.5}h3" stroke="#bbb" stroke-width=".8"/>`;
  });
  b.innerHTML = t + '</svg>';
});

// Arrows: tail x, tail y, tip x, tip y
document.getElementById('arrows').innerHTML = [[1331,190.5,1408,188],[1282,270.5,1587,241],[1316,315.5,1390,294],[1353,366,1418,358.5],[1346,449.5,1417,433.5]].map(([a, b, c, d]) => {
  const L = Math.hypot(c - a, d - b), deg = Math.atan2(d - b, c - a) * 180 / Math.PI;
  return `<g transform="translate(${a} ${b}) rotate(${deg})"><path d="M0 0H${L - 20}" stroke-width="3" stroke-linecap="round"/><path d="M${L} 0l-26-6 2 6-2 6z" stroke="none"/></g>`;
}).join('');

const mx = document.getElementById('mx');
mx.focus();
mx.select();
</script>
</body>
</html>
